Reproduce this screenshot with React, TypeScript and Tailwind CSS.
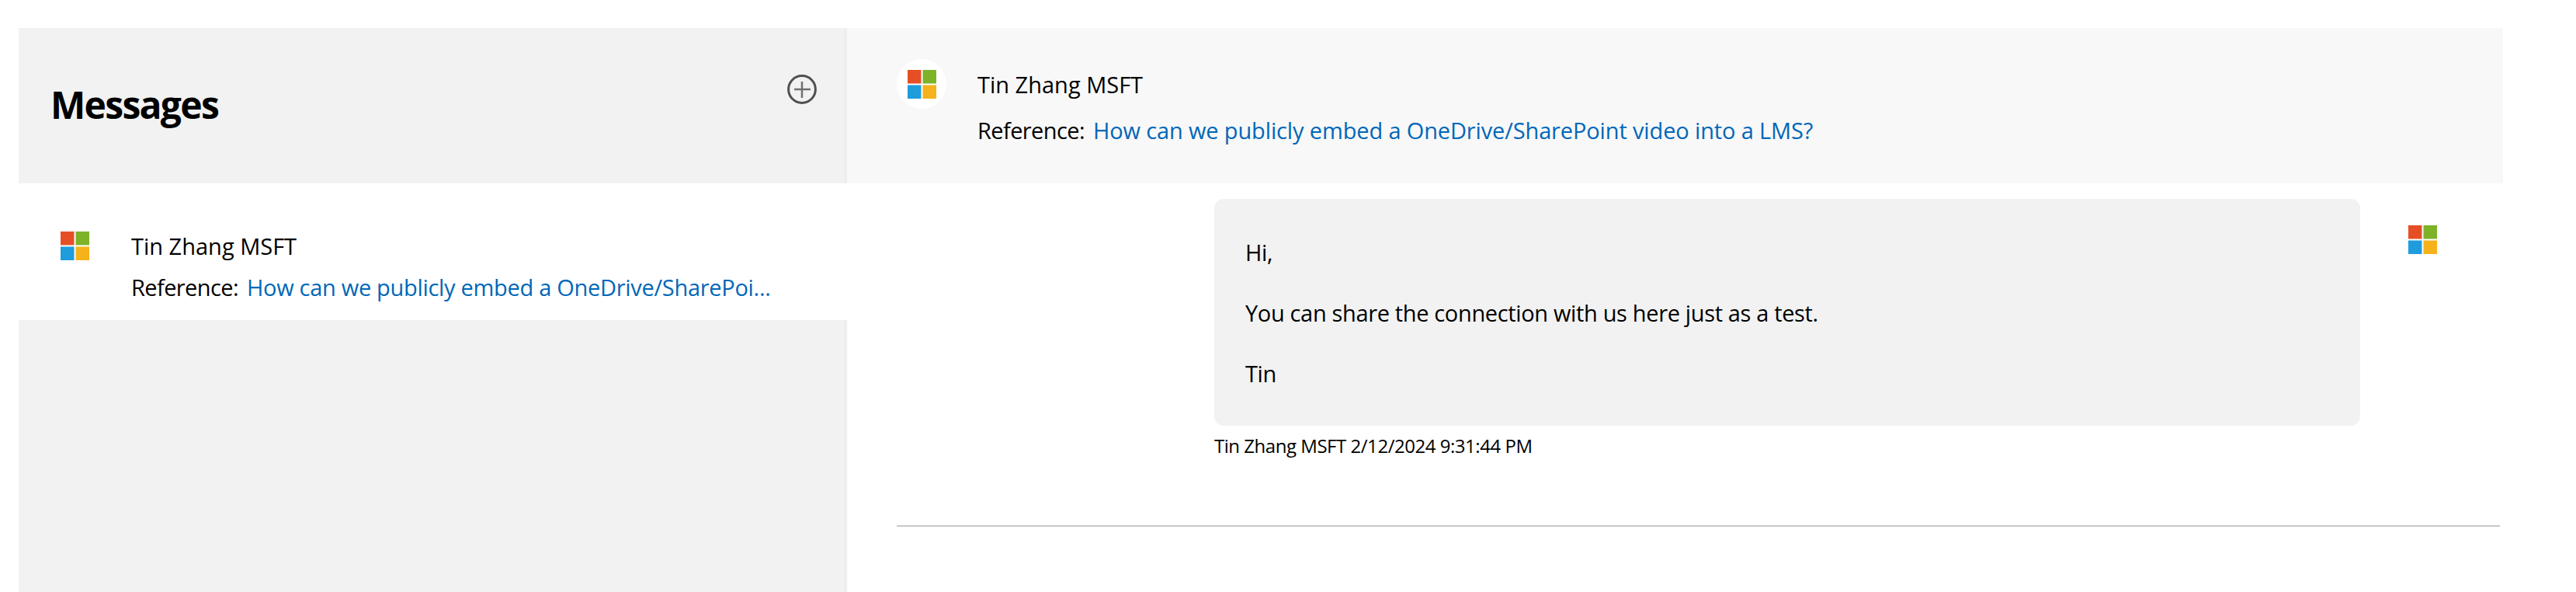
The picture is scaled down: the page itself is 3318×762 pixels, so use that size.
import React from "react";

function MsLogo() {
  return (
    <svg width="37" height="37" viewBox="0 0 37 37" className="block shrink-0">
      <rect x="0" y="0" width="17.5" height="17.5" fill="#e64f25" />
      <rect x="19.5" y="0" width="17.5" height="17.5" fill="#7db229" />
      <rect x="0" y="19.5" width="17.5" height="17.5" fill="#1f9cdc" />
      <rect x="19.5" y="19.5" width="17.5" height="17.5" fill="#f5b21b" />
    </svg>
  );
}

function PlusCircle() {
  return (
    <svg width="38" height="38" viewBox="0 0 38 38" className="block">
      <circle cx="19" cy="19" r="17.4" fill="none" stroke="#505050" strokeWidth="3" />
      <path d="M19 9v21M9 19h21" fill="none" stroke="#707070" strokeWidth="2.5" />
    </svg>
  );
}

export default function App() {
  return (
    <div className="flex h-[762px] w-full overflow-hidden bg-white pl-[24px] pt-[36px] font-['Open_Sans','Noto_Sans',sans-serif] text-[29px] leading-[42px] text-black">
      <div className="flex w-[1067px] shrink-0 flex-col">
        <div className="flex h-[200px] shrink-0 items-center justify-between border-r-4 border-[#eeeeee] bg-[#f2f2f2] pl-[41px] pr-[35px]">
          <h1 className="-mt-[2px] text-[48px] font-bold leading-[60px] tracking-[-1.7px]">Messages</h1>
          <div className="mb-[42px]">
            <PlusCircle />
          </div>
        </div>
        <div className="flex h-[176px] shrink-0 bg-white pl-[54px] pt-[62px]">
          <MsLogo />
          <div className="-mt-[2px] ml-[54px] flex flex-col gap-[11px] tracking-[-0.3px]">
            <div className="tracking-[0px]">Tin Zhang MSFT</div>
            <div className="whitespace-nowrap">
              <span className="tracking-[-0.6px]">Reference:</span>
              <span className="ml-[11px] text-[#0067b8]">How can we publicly embed a OneDrive/SharePoi...</span>
            </div>
          </div>
        </div>
        <div className="flex-1 border-r-4 border-[#eeeeee] bg-[#f2f2f2]" />
      </div>

      <div className="flex w-[2133px] shrink-0 flex-col">
        <div className="flex h-[200px] shrink-0 bg-[#f8f8f8] pl-[64px] pt-[40px]">
          <div className="flex h-[64px] w-[64px] shrink-0 items-center justify-center rounded-full bg-white">
            <MsLogo />
          </div>
          <div className="ml-[40px] flex flex-col gap-[17px] pt-[12px] tracking-[-0.14px]">
            <div className="tracking-[0px]">Tin Zhang MSFT</div>
            <div className="whitespace-nowrap">
              <span className="tracking-[-0.6px]">Reference:</span>
              <span className="ml-[11px] text-[#0067b8]">How can we publicly embed a OneDrive/SharePoint video into a LMS?</span>
            </div>
          </div>
        </div>
        <div className="w-[2129px] pl-[64px]">
          <div className="flex border-b-2 border-[#c8c8c8] pb-[86px] pl-[409px] pt-[20px]">
            <div className="w-[1476px] shrink-0">
              <div className="flex h-[292px] flex-col gap-[36px] rounded-[12px] bg-[#f2f2f2] px-[40px] pt-[48px] tracking-[-0.35px]">
                <p>Hi,</p>
                <p>You can share the connection with us here just as a test.</p>
                <p>Tin</p>
              </div>
              <div className="mt-[10px] text-[24px] leading-[32px] tracking-[-0.47px]">Tin Zhang MSFT 2/12/2024 9:31:44 PM</div>
            </div>
            <div className="ml-[62px] mt-[34px]">
              <MsLogo />
            </div>
          </div>
        </div>
      </div>
    </div>
  );
}
